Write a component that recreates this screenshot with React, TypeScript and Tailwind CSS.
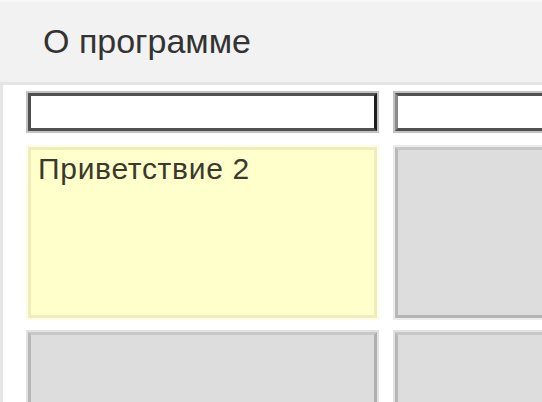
export default function App() {
  return (
    <div
      className="w-[542px] h-[402px] overflow-hidden bg-white flex flex-col"
      style={{ fontFamily: '"Liberation Sans", Arial, sans-serif' }}
    >
      <div className="h-[82px] shrink-0 bg-[#f2f2f2] border-t-2 border-[#f8f8f8] pl-[43px] pt-[22px]">
        <span className="text-[34px] leading-none text-[#333333]">О программе</span>
      </div>
      <div className="h-[3px] shrink-0 bg-[#e4e4e4]" />
      <div className="flex flex-1 min-h-0">
        <div className="w-[3px] shrink-0 bg-[#e6e6e6]" />
        <div className="flex-1 pl-[23px] pt-[6px]">
          <div className="grid grid-cols-[353px_353px] gap-x-[14px]">
            <div className="h-[42px] p-[2px] bg-[#c2c2c2]">
              <div className="h-full bg-white border-[3px] border-[#505050] border-r-[#1e1e1e]" />
            </div>
            <div className="h-[42px] p-[2px] bg-[#c2c2c2]">
              <div className="h-full bg-white border-[3px] border-[#505050] border-r-[#1e1e1e] border-l-[#8a8a8a]" />
            </div>
          </div>
          <div className="grid grid-cols-[353px_353px] gap-x-[14px] mt-[12px]">
            <div className="h-[175px] p-[2px] bg-[#fffbe4]">
              <div className="h-full bg-[#ffffcc] border-[3px] border-[#eeeebd] pl-[7px] pt-[4px]">
                <span className="text-[30px] leading-none tracking-[0.7px] text-[#3a3a2c]">Приветствие 2</span>
              </div>
            </div>
            <div className="h-[175px] p-[2px] bg-[#ececec]">
              <div className="h-full bg-[#dddddd] border-[3px] border-[#c8c8c8] border-l-[#b8b8b8] border-b-[#b4b4b4]" />
            </div>
          </div>
          <div className="grid grid-cols-[353px_353px] gap-x-[14px] mt-[10px]">
            <div className="h-[120px] p-[2px] bg-[#e2e2e2]">
              <div className="h-full bg-[#dddddd] border-[3px] border-[#c8c8c8] border-l-[#b8b8b8] border-r-[#b0b0b0]" />
            </div>
            <div className="h-[120px] p-[2px] bg-[#e2e2e2]">
              <div className="h-full bg-[#dddddd] border-[3px] border-[#c8c8c8] border-l-[#b8b8b8]" />
            </div>
          </div>
        </div>
      </div>
    </div>
  );
}
